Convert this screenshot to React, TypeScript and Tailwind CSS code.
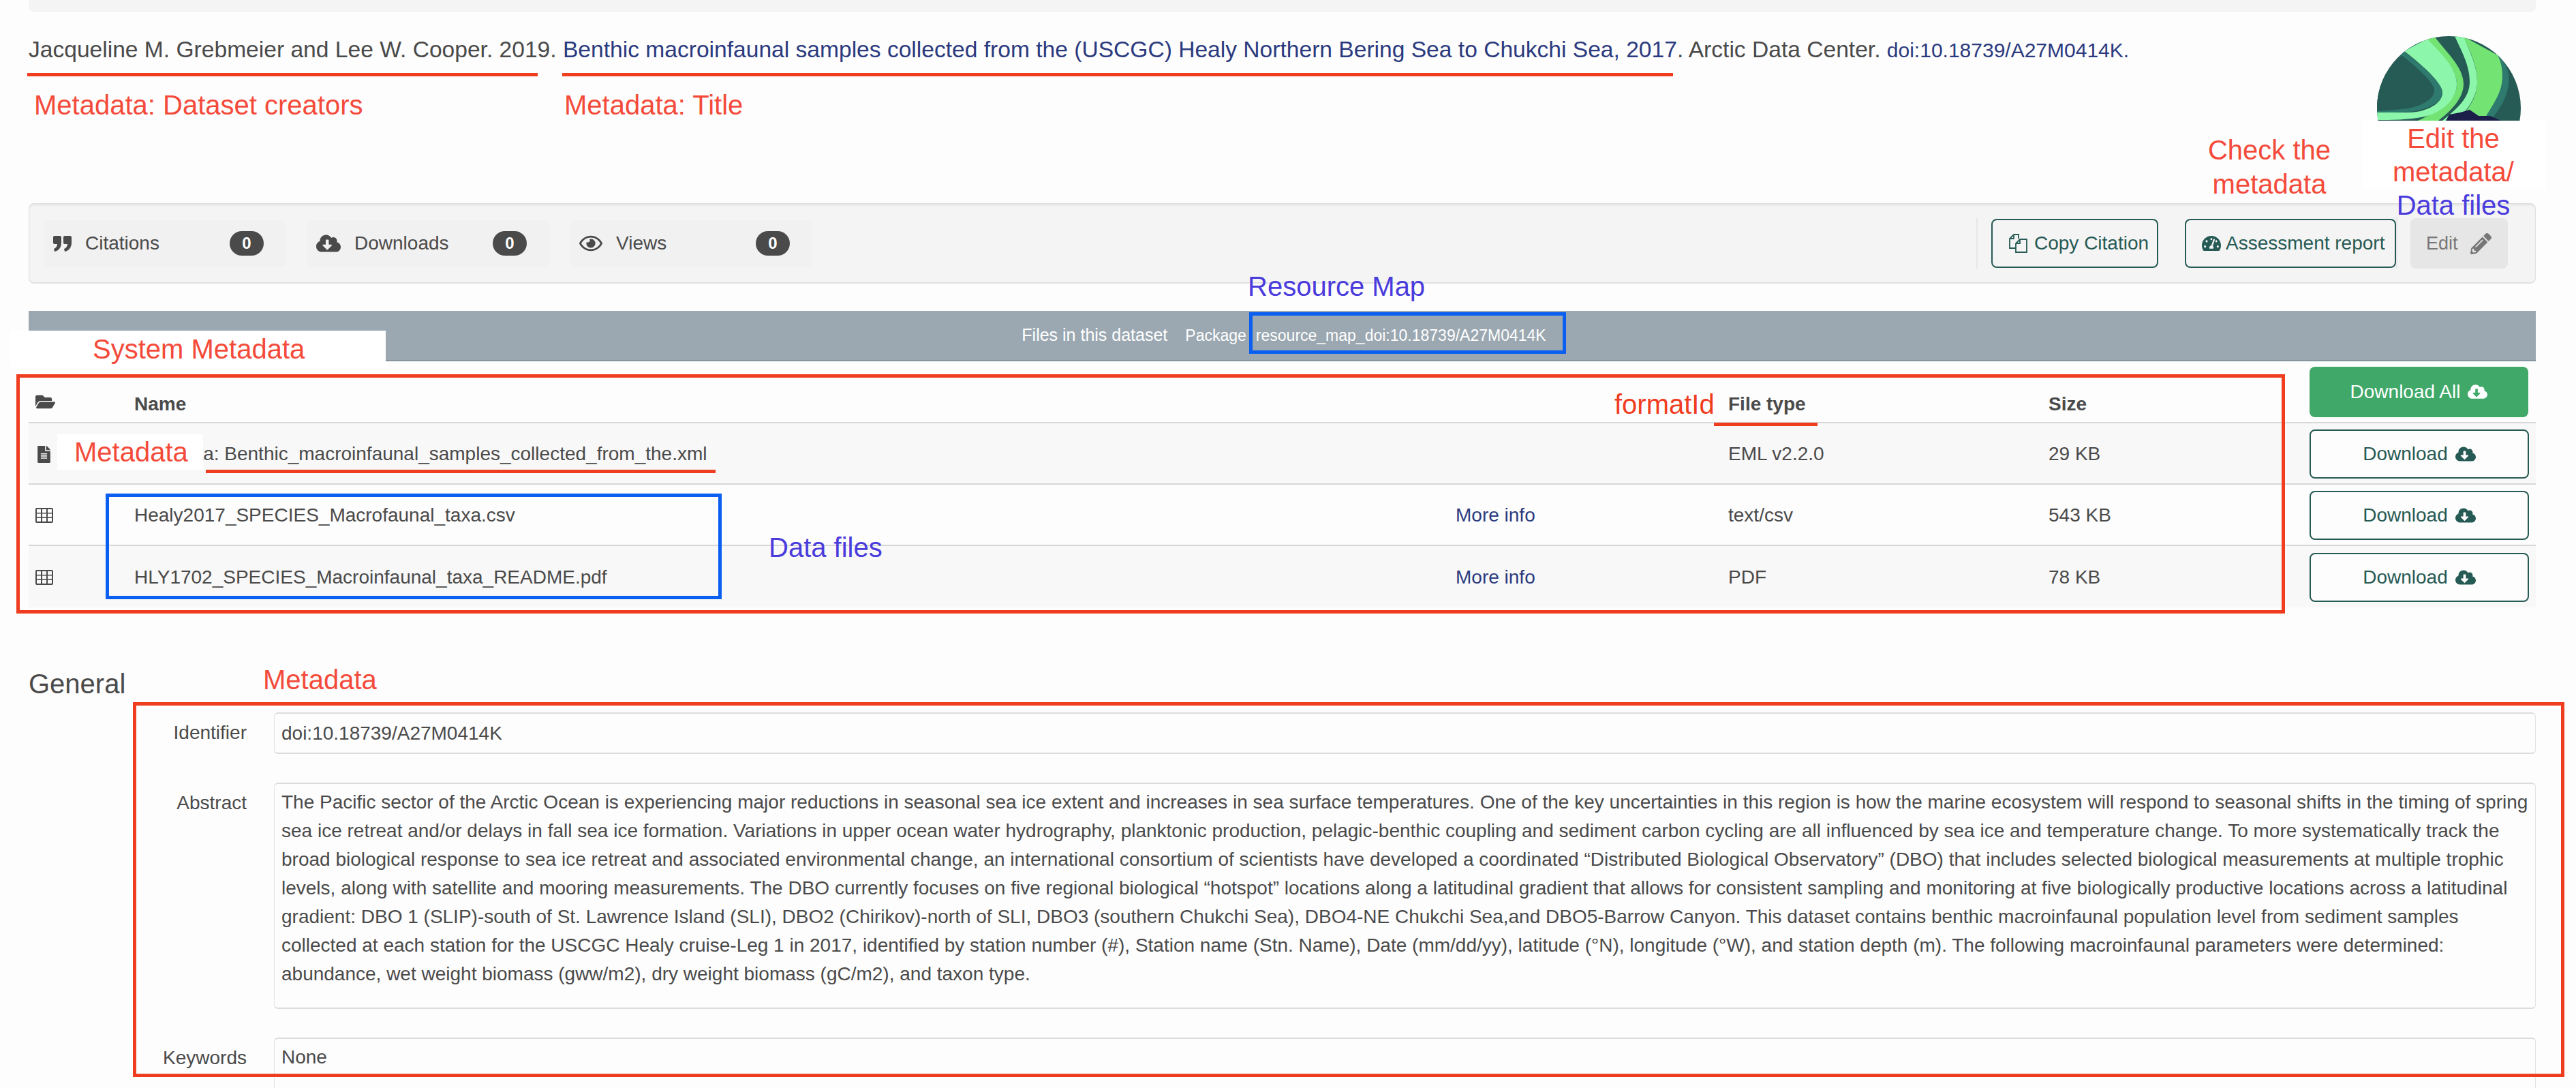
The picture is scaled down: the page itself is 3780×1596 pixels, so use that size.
/**
 * Dataset landing page with review annotations on top
 */

import { FaCloudDownloadAlt, FaFileAlt, FaFolderOpen, FaPencilAlt, FaRegEye, FaTachometerAlt } from 'react-icons/fa'
import type { ReactNode } from 'react'

const ROW_GRID = 'grid grid-cols-[155px_1939px_400px_470px_383px_1fr] items-center border-b-2 border-[#d8d8d8]'

function TableIcon() {
  // outline with 3x3 cells cut out
  const cells = [2, 10, 18].flatMap((x) => [2, 8.5, 15].map((y) => `M${x} ${y}h6v5h-6z`)).join('')
  return (
    <svg width="26" height="22" viewBox="0 0 26 22" className="block">
      <path fillRule="evenodd" fill="currentColor" d={`M2 0H24Q26 0 26 2V20Q26 22 24 22H2Q0 22 0 20V2Q0 0 2 0Z${cells}`} />
    </svg>
  )
}

function QuoteIcon() {
  return (
    <svg width="27" height="23" viewBox="0 0 27 23" className="block" fill="currentColor">
      <path d="M0 2Q0 0 2 0H10Q12 0 12 2V10C12 17 8 22 2 23L1 19C4 18 6 15 6 12H2Q0 12 0 10Z" />
      <path d="M15 2Q15 0 17 0H25Q27 0 27 2V10C27 17 23 22 17 23L16 19C19 18 21 15 21 12H17Q15 12 15 10Z" />
    </svg>
  )
}

function CopyIcon() {
  return (
    <svg width="27" height="28" viewBox="0 0 27 28" className="block" fill="none" stroke="currentColor" strokeWidth="1.8">
      <path d="M7 1H14V7M7 1L1 7V21H10M7 1V7H1" />
      <path d="M16 8H26V27H10V14ZM16 8V14H10" />
    </svg>
  )
}

const files = [
  { icon: <FaFileAlt className="text-[25px]" />, name: 'Metadata: Benthic_macroinfaunal_samples_collected_from_the.xml', info: false, type: 'EML v2.2.0', size: '29 KB', bg: 'bg-[#f8f8f8]' },
  { icon: <TableIcon />, name: 'Healy2017_SPECIES_Macrofaunal_taxa.csv', info: true, type: 'text/csv', size: '543 KB', bg: 'bg-[#fdfdfd]' },
  { icon: <TableIcon />, name: 'HLY1702_SPECIES_Macroinfaunal_taxa_README.pdf', info: true, type: 'PDF', size: '78 KB', bg: 'bg-[#f8f8f8]' },
]

function Stat({ icon, label }: { icon: ReactNode; label: string }) {
  return (
    <div className="flex h-[69px] w-[355px] items-center gap-[20px] rounded-lg bg-[#f1f1f1] pl-[13px] pr-[33px] text-[28px] text-[#4a4a4a]">
      {icon}
      <span>{label}</span>
      <span className="ml-auto flex h-[36px] w-[50px] items-center justify-center rounded-[18px] bg-[#4a4a4a] text-[24px] font-bold text-white">0</span>
    </div>
  )
}

function FieldRow({ label, children, boxClass }: { label: string; children: ReactNode; boxClass: string }) {
  return (
    <div className="flex">
      <div className="w-[320px] pt-[12px] text-right text-[28px] leading-[36px] text-[#4a4a4a]">{label}</div>
      <div className={`ml-[40px] w-[3319px] rounded-md border border-t-2 border-b-2 border-[#e3e3e3] border-t-[#dcdcdc] border-b-[#dcdcdc] bg-[#fdfdfd] px-[10px] text-[28px] text-[#4a4a4a] ${boxClass}`}>
        {children}
      </div>
    </div>
  )
}

function Logo() {
  return (
    <svg width="211" height="124" viewBox="0 0 211 124" className="block">
      <defs>
        <clipPath id="dome">
          <circle cx="105.5" cy="105.5" r="105.5" />
        </clipPath>
      </defs>
      <g clipPath="url(#dome)">
        <rect width="211" height="124" fill="#265a54" />
        <path d="M177 26C190 40 197 55 192 77C189 92 180 108 166 124L150 124L170 30Z" fill="#2f7a6e" />
        <path d="M126 0L177 28C186 45 187 70 176 90C170 102 163 112 156 124L120 124C135 105 147 90 147 67C147 40 135 20 126 0Z" fill="#73e374" />
        <path d="M114 0L127 0C133 18 147 40 147 67C147 88 135 105 118 124L96 124C115 108 136 92 136 67C136 42 123 20 114 0Z" fill="#8cf7ab" />
        <path d="M70 0L84 0C100 22 127 45 127 70C127 92 108 110 90 124L60 124C85 112 117 98 117 70C117 45 90 25 70 0Z" fill="#73e374" />
        <path d="M40 22L74 4C90 22 117 45 117 70C117 93 95 112 70 118C45 123 20 123 0 123L0 112L46 112C70 112 96 100 96 83C96 70 70 45 40 22Z" fill="#8cf7ab" />
        <path d="M39 22C62 40 96 68 96 83C96 97 72 109 46 111C30 112 15 112 0 112L0 80Z" fill="#2f7a6e" />
        <path d="M36 28C58 45 84 68 84 80C84 92 66 102 46 106C30 108 15 109 0 110L0 70Z" fill="#265a54" />
        <path d="M101 124L106 115L122 112L136 108L149 117L166 117L182 124Z" fill="#1b1f4a" />
      </g>
    </svg>
  )
}

function Annotations() {
  return (
    <>
      {/* red rules and frames */}
      <div className="absolute left-[40px] top-[107px] h-[5px] w-[749px] bg-[#f03c1f]" />
      <div className="absolute left-[825px] top-[107px] h-[5px] w-[1630px] bg-[#f03c1f]" />
      <div className="absolute left-[302px] top-[689px] h-[5px] w-[748px] bg-[#f03c1f]" />
      <div className="absolute left-[2515px] top-[620px] h-[5px] w-[152px] bg-[#f03c1f]" />
      <div className="absolute left-[24px] top-[549px] h-[351px] w-[3329px] border-[5px] border-[#f03c1f]" />
      <div className="absolute left-[195px] top-[1030px] h-[550px] w-[3568px] border-[5px] border-[#f03c1f]" />

      {/* blue frames */}
      <div className="absolute left-[1833px] top-[458px] h-[61px] w-[465px] border-[5px] border-[#0a5ff0]" />
      <div className="absolute left-[155px] top-[724px] h-[155px] w-[904px] border-[5px] border-[#0a5ff0]" />

      {/* white patches that hide what the labels sit on */}
      <div className="absolute left-[15px] top-[485px] flex h-[54px] w-[551px] items-center bg-white pl-[121px] text-[40px] text-[#f44a3a]">System Metadata</div>
      <div className="absolute left-[84px] top-[637px] flex h-[52px] w-[214px] items-center bg-white pl-[25px] text-[40px] text-[#f44a3a]">Metadata</div>
      <div className="absolute left-[3467px] top-[177px] h-[100px] w-[268px] bg-white" />

      {/* labels */}
      <div className="absolute left-[50px] top-[130px] text-[40px] leading-[48px] text-[#f44a3a]">Metadata: Dataset creators</div>
      <div className="absolute left-[828px] top-[130px] text-[40px] leading-[48px] text-[#f44a3a]">Metadata: Title</div>
      <div className="absolute left-[3210px] top-[195px] w-[240px] text-center text-[40px] leading-[50px] text-[#f44a3a]">Check the<br />metadata</div>
      <div className="absolute left-[3467px] top-[179px] w-[266px] text-center text-[40px] leading-[49px] text-[#f44a3a]">
        Edit the<br />metadata/<br /><span className="text-[#4a3bdc]">Data files</span>
      </div>
      <div className="absolute left-[1831px] top-[396px] text-[40px] leading-[48px] text-[#4a3bdc]">Resource Map</div>
      <div className="absolute left-[1128px] top-[779px] text-[40px] leading-[48px] text-[#4a3bdc]">Data files</div>
      <div className="absolute left-[2369px] top-[569px] text-[40px] leading-[48px] text-[#f03c1f]">formatId</div>
      <div className="absolute left-[386px] top-[973px] text-[40px] leading-[48px] text-[#f44a3a]">Metadata</div>
    </>
  )
}

export default function App() {
  return (
    <div className="relative h-[1596px] w-[3780px] overflow-hidden bg-[#fdfdfd] font-['Liberation_Sans',Arial,sans-serif] text-[#4a4a4a]">
      <div className="ml-[42px] w-[3679px]">
        {/* end of the previous panel */}
        <div className="h-[18px] rounded-b-lg bg-[#f4f4f4]" />

        {/* Citation */}
        <div className="flex h-[280px] items-start justify-between">
          <p className="mt-[34px] whitespace-nowrap text-[33.6px] leading-[42px]">
            Jacqueline M. Grebmeier and Lee W. Cooper. 2019.{' '}
            <span className="text-[#2b3a7e]">Benthic macroinfaunal samples collected from the (USCGC) Healy Northern Bering Sea to Chukchi Sea, 2017</span>
            . Arctic Data Center.{' '}
            <span className="text-[30px] text-[#2b3a7e]">doi:10.18739/A27M0414K.</span>
          </p>
          <div className="mr-[22px] mt-[35px]">
            <Logo />
          </div>
        </div>

        {/* Metrics + actions */}
        <div className="flex h-[118px] items-center rounded-lg border border-t-2 border-b-2 border-[#e0e0e0] bg-[#f4f4f4] pl-[22px] pr-[40px] shadow-[inset_0_2px_3px_rgba(0,0,0,0.04)]">
          <div className="flex gap-[31px]">
            <Stat icon={<QuoteIcon />} label="Citations" />
            <Stat icon={<FaCloudDownloadAlt className="text-[36px]" />} label="Downloads" />
            <Stat icon={<FaRegEye className="text-[34px]" />} label="Views" />
          </div>
          <div className="ml-auto flex h-[74px] items-center">
            <div className="h-[74px] w-[2px] bg-[#e6e6e6]" />
            <button className="ml-[20px] flex h-[72px] w-[245px] items-center gap-[10px] rounded-lg border-2 border-[#265a54] pl-[24px] text-[28px] text-[#265a54]">
              <CopyIcon />
              Copy Citation
            </button>
            <button className="ml-[39px] flex h-[72px] w-[310px] items-center gap-[7px] rounded-lg border-2 border-[#265a54] pl-[23px] text-[28px] text-[#265a54]">
              <FaTachometerAlt className="text-[28px]" />
              Assessment report
            </button>
            <div className="h-[74px] w-[2px] bg-[#e6e6e6]" />
            <div className="ml-[19px] flex h-[74px] w-[143px] items-center gap-[18px] rounded-lg bg-[#e6e6e6] pl-[23px] text-[27px] text-[#777777]">
              Edit
              <FaPencilAlt className="text-[31px]" />
            </div>
          </div>
        </div>

        {/* Package bar */}
        <div className="mt-[40px] flex h-[74px] items-center justify-center gap-[26px] border-b-2 border-[#84959f] bg-[#9ba8b1] pl-[5px] text-white">
          <span className="text-[25px]">Files in this dataset</span>
          <span className="flex gap-[14px] text-[23px]">
            <span>Package</span>
            <span>resource_map_doi:10.18739/A27M0414K</span>
          </span>
        </div>

        {/* Files table */}
        <div className={`${ROW_GRID} h-[91px] text-[28px]`}>
          <span className="mt-[30px] pl-[10px] text-[29px]"><FaFolderOpen /></span>
          <span className="mt-[36px] font-bold">Name</span>
          <span />
          <span className="mt-[36px] font-bold">File type</span>
          <span className="mt-[36px] font-bold">Size</span>
          <button className="flex h-[74px] w-[321px] items-center justify-center gap-[11px] rounded-lg bg-[#40a868] text-[28px] text-white">
            Download All
            <FaCloudDownloadAlt className="text-[29px]" />
          </button>
        </div>
        <div>
          {files.map((f) => (
            <div key={f.name} className={`${ROW_GRID} h-[90px] pt-[2px] text-[28px] last:border-b-0 ${f.bg}`}>
              <span className="pl-[10px]">{f.icon}</span>
              <span className="whitespace-nowrap">{f.name}</span>
              <span className="text-[#2b3a7e]">{f.info ? 'More info' : ''}</span>
              <span>{f.type}</span>
              <span>{f.size}</span>
              <button className="flex h-[72px] w-[322px] items-center justify-center gap-[11px] rounded-lg border-2 border-[#265a54] bg-[#fdfdfd] text-[28px] text-[#265a54]">
                Download
                <FaCloudDownloadAlt className="text-[30px]" />
              </button>
            </div>
          ))}
        </div>

        {/* General section */}
        <h2 className="mt-[88px] text-[40px] leading-[48px]">General</h2>
        <div className="mt-[18px] flex flex-col gap-[42px]">
          <FieldRow label="Identifier" boxClass="flex h-[61px] items-center">
            doi:10.18739/A27M0414K
          </FieldRow>
          <FieldRow label="Abstract" boxClass="h-[332px] py-[6px] leading-[42px]">
            The Pacific sector of the Arctic Ocean is experiencing major reductions in seasonal sea ice extent and increases in sea surface temperatures. One of the key uncertainties in this region is how the marine ecosystem will respond to seasonal shifts in the timing of spring sea ice retreat and/or delays in fall sea ice formation. Variations in upper ocean water hydrography, planktonic production, pelagic-benthic coupling and sediment carbon cycling are all influenced by sea ice and temperature change. To more systematically track the broad biological response to sea ice retreat and associated environmental change, an international consortium of scientists have developed a coordinated “Distributed Biological Observatory” (DBO) that includes selected biological measurements at multiple trophic levels, along with satellite and mooring measurements. The DBO currently focuses on five regional biological “hotspot” locations along a latitudinal gradient that allows for consistent sampling and monitoring at five biologically productive locations across a latitudinal gradient: DBO 1 (SLIP)-south of St. Lawrence Island (SLI), DBO2 (Chirikov)-north of SLI, DBO3 (southern Chukchi Sea), DBO4-NE Chukchi Sea,and DBO5-Barrow Canyon. This dataset contains benthic macroinfaunal population level from sediment samples collected at each station for the USCGC Healy cruise-Leg 1 in 2017, identified by station number (#), Station name (Stn. Name), Date (mm/dd/yy), latitude (°N), longitude (°W), and station depth (m). The following macroinfaunal parameters were determined: abundance, wet weight biomass (gww/m2), dry weight biomass (gC/m2), and taxon type.
          </FieldRow>
          <FieldRow label="Keywords" boxClass="h-[110px] pt-[8px] leading-[38px]">
            None
          </FieldRow>
        </div>
      </div>

      <Annotations />
    </div>
  )
}
